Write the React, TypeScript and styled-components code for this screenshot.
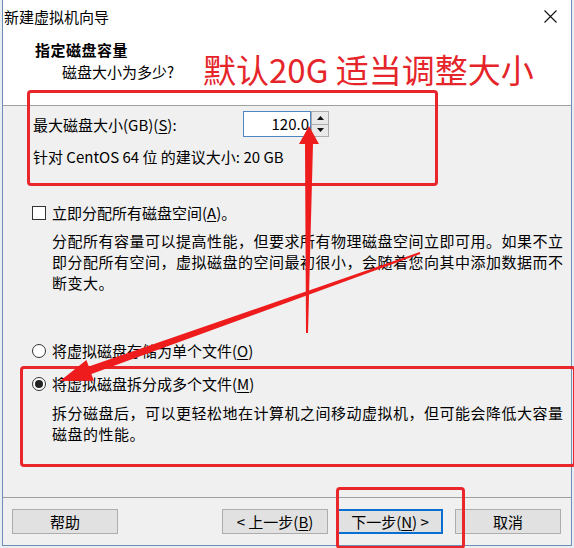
import React from "react";
import styled, { createGlobalStyle } from "styled-components";

const GlobalStyle = createGlobalStyle`
  html, body {
    margin: 0;
    padding: 0;
    background: #ffffff;
  }
  body {
    font-family: "Noto Sans CJK SC", "Noto Sans", sans-serif;
    color: #000;
  }
`;

const Page = styled.div`
  width: 574px;
  height: 548px;
  padding-left: 2px;
  box-sizing: border-box;
  background: #e9eef4;
  overflow: hidden;
`;

const Frame = styled.div`
  position: relative;
  width: 570px;
  height: 546px;
  box-sizing: border-box;
  border: 1px solid #6f8fb5;
  border-top: none;
  display: flex;
  flex-direction: column;
  background: #f0f0f0;
`;

const TitleBar = styled.div`
  height: 32px;
  background: #fff;
  display: flex;
  align-items: center;
  justify-content: space-between;
  padding: 0 14px 0 1px;
  font-size: 15px;
`;

const Header = styled.div`
  height: 73px;
  background: #fff;
  border-bottom: 1px solid #a0a0a0;
  padding-left: 32px;
  display: flex;
  flex-direction: column;
`;

const HeaderTitle = styled.div`
  font-size: 15px;
  font-weight: 700;
  line-height: 21px;
  margin-top: 7px;
  letter-spacing: 0.5px;
`;

const HeaderSub = styled.div`
  font-size: 15px;
  line-height: 21px;
  margin-top: 1px;
  padding-left: 27px;
`;

const Body = styled.div`
  flex: 1;
  padding: 5px 0 0 30px;
  display: flex;
  flex-direction: column;
  font-size: 15px;
`;

const SizeRow = styled.div`
  display: flex;
  align-items: center;
  height: 26px;
`;

const Label = styled.span`
  width: 210px;
  line-height: 21px;
`;

const U = styled.span`
  text-decoration: underline;
  text-underline-offset: 2px;
`;

const SpinBox = styled.div`
  display: flex;
  height: 26px;
`;

const NumInput = styled.div`
  width: 68px;
  height: 26px;
  box-sizing: border-box;
  border: 1px solid #4f86c0;
  background: #fff;
  text-align: right;
  padding-right: 1px;
  line-height: 24px;
  font-size: 15px;
`;

const SpinButtons = styled.div`
  display: flex;
  flex-direction: column;
  width: 18px;
`;

const SpinButton = styled.div`
  flex: 1;
  box-sizing: border-box;
  border: 1px solid #adadad;
  border-top-width: ${(p: { $down?: boolean }) => (p.$down ? "0" : "1px")};
  background: #e9e9e9;
  display: flex;
  align-items: center;
  justify-content: center;
`;

const Line = styled.div<{ $mt?: number; $indent?: number }>`
  line-height: 21px;
  margin-top: ${(p) => p.$mt ?? 0}px;
  padding-left: ${(p) => p.$indent ?? 0}px;
  white-space: nowrap;
`;

const Para = styled.div<{ $mt: number }>`
  margin-top: ${(p) => p.$mt}px;
  padding-left: 19px;
  line-height: 21px;
  letter-spacing: 0.5px;
  white-space: nowrap;
`;

const OptionRow = styled.div<{ $mt: number }>`
  display: flex;
  align-items: center;
  gap: 6px;
  height: 21px;
  margin-top: ${(p) => p.$mt}px;
  white-space: nowrap;
`;

const CheckBox = styled.span`
  width: 14px;
  height: 14px;
  box-sizing: border-box;
  border: 1px solid #333;
  background: #fff;
  margin-left: -1px;
`;

const Radio = styled.span<{ $on?: boolean }>`
  width: 14px;
  height: 14px;
  box-sizing: border-box;
  border: 1px solid #333;
  border-radius: 50%;
  background: #fff;
  margin-left: -1px;
  display: flex;
  align-items: center;
  justify-content: center;
  &::after {
    content: "";
    width: 8px;
    height: 8px;
    border-radius: 50%;
    background: ${(p) => (p.$on ? "#222" : "transparent")};
  }
`;

const Footer = styled.div`
  height: 48px;
  border-top: 1px solid #a0a0a0;
  box-sizing: border-box;
  display: flex;
  padding: 11px 0 0 9px;
`;

const Button = styled.div<{ $focus?: boolean; $ml?: number }>`
  width: 106px;
  height: 25px;
  box-sizing: border-box;
  margin-left: ${(p) => p.$ml ?? 0}px;
  border: ${(p) => (p.$focus ? "2px solid #0a6fd0" : "1px solid #adadad")};
  background: #e1e1e1;
  font-size: 15px;
  display: flex;
  align-items: center;
  justify-content: center;
  line-height: 21px;
`;

const Mark = styled.div<{ $x: number; $y: number; $w: number; $h: number }>`
  position: absolute;
  left: ${(p) => p.$x}px;
  top: ${(p) => p.$y}px;
  width: ${(p) => p.$w}px;
  height: ${(p) => p.$h}px;
  box-sizing: border-box;
  border: 3px solid #e8262b;
  border-radius: 4px;
  pointer-events: none;
`;

const Note = styled.div`
  position: absolute;
  left: 200px;
  top: 49px;
  font-size: 33px;
  line-height: 40px;
  color: #e5252a;
  white-space: nowrap;
`;

const Arrows = styled.svg`
  position: absolute;
  left: 0;
  top: 0;
  pointer-events: none;
`;

export default function App() {
  return (
    <>
      <GlobalStyle />
      <Page>
        <Frame>
          <TitleBar>
            <span>新建虚拟机向导</span>
            <svg width="13" height="13" viewBox="0 0 13 13">
              <path d="M0.5 0.5 L12.5 12.5 M12.5 0.5 L0.5 12.5" stroke="#111" strokeWidth="1.1" />
            </svg>
          </TitleBar>
          <Header>
            <HeaderTitle>指定磁盘容量</HeaderTitle>
            <HeaderSub>磁盘大小为多少?</HeaderSub>
          </Header>
          <Body>
            <SizeRow>
              <Label>
                最大磁盘大小(GB)(<U>S</U>):
              </Label>
              <SpinBox>
                <NumInput>120.0</NumInput>
                <SpinButtons>
                  <SpinButton>
                    <svg width="7" height="4" viewBox="0 0 7 4">
                      <path d="M0 4 L3.5 0 L7 4 Z" fill="#111" />
                    </svg>
                  </SpinButton>
                  <SpinButton $down>
                    <svg width="7" height="4" viewBox="0 0 7 4">
                      <path d="M0 0 L3.5 4 L7 0 Z" fill="#111" />
                    </svg>
                  </SpinButton>
                </SpinButtons>
              </SpinBox>
            </SizeRow>
            <Line $mt={9}>针对 CentOS 64 位 的建议大小: 20 GB</Line>
            <OptionRow $mt={35}>
              <CheckBox />
              <span>
                立即分配所有磁盘空间(<U>A</U>)。
              </span>
            </OptionRow>
            <Para $mt={7}>
              <div>分配所有容量可以提高性能，但要求所有物理磁盘空间立即可用。如果不立</div>
              <div>即分配所有空间，虚拟磁盘的空间最初很小，会随着您向其中添加数据而不</div>
              <div>断变大。</div>
            </Para>
            <OptionRow $mt={47}>
              <Radio />
              <span>
                将虚拟磁盘存储为单个文件(<U>O</U>)
              </span>
            </OptionRow>
            <OptionRow $mt={12}>
              <Radio $on />
              <span>
                将虚拟磁盘拆分成多个文件(<U>M</U>)
              </span>
            </OptionRow>
            <Para $mt={8}>
              <div>拆分磁盘后，可以更轻松地在计算机之间移动虚拟机，但可能会降低大容量</div>
              <div>磁盘的性能。</div>
            </Para>
          </Body>
          <Footer>
            <Button>帮助</Button>
            <Button $ml={104}>
              &lt; 上一步(<U>B</U>)
            </Button>
            <Button $ml={9} $focus>
              下一步(<U>N</U>) &gt;
            </Button>
            <Button $ml={12}>取消</Button>
          </Footer>

          <Note>默认20G 适当调整大小</Note>
          <Mark $x={24} $y={90} $w={411} $h={96} />
          <Mark $x={17} $y={366} $w={556} $h={101} />
          <Mark $x={333} $y={487} $w={129} $h={62} />
          <Arrows width="570" height="546" viewBox="0 0 570 546">
            <polygon
              points="306,126 296,144 302,144 303,333 305,333 310,144 316,144"
              fill="#ee1c1c"
            />
            <polygon
              points="57,381 90.8,380.7 88.4,374.1 417.3,253.9 416.7,252.1 85.8,366.5 83.4,359.9"
              fill="#ee1c1c"
            />
          </Arrows>
        </Frame>
      </Page>
    </>
  );
}
